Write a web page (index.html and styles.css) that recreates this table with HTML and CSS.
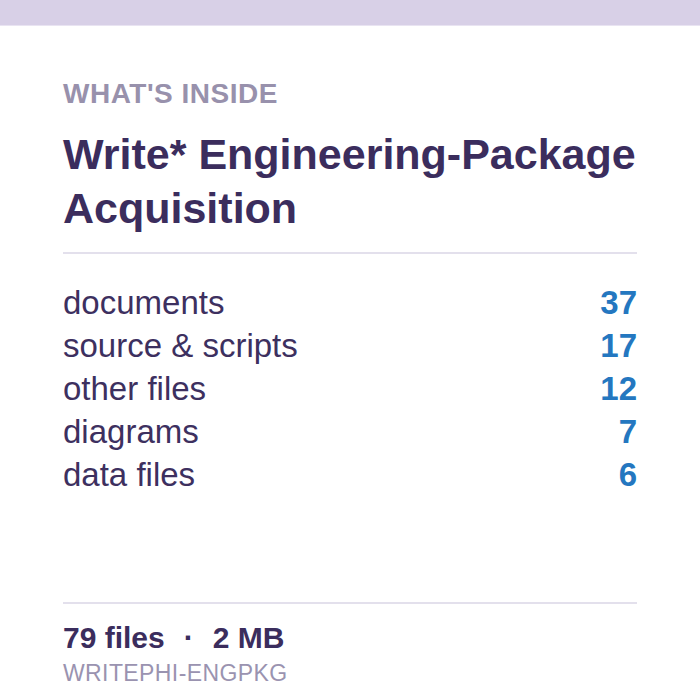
FILE: index.html
```html
<!DOCTYPE html>
<html>
<head>
<meta charset="utf-8">
<link rel="stylesheet" href="styles.css">
</head>
<body>
<div class="page">
  <div class="topbar"></div>
  <div class="card">
    <div class="eyebrow">WHAT'S INSIDE</div>
    <h1 class="title">Write* Engineering-Package Acquisition</h1>
    <ul class="list">
      <li class="row"><span class="label">documents</span><span class="count">37</span></li>
      <li class="row"><span class="label">source &amp; scripts</span><span class="count">17</span></li>
      <li class="row"><span class="label">other files</span><span class="count">12</span></li>
      <li class="row"><span class="label">diagrams</span><span class="count">7</span></li>
      <li class="row"><span class="label">data files</span><span class="count">6</span></li>
    </ul>
    <div class="footer">
      <div class="totals">79 files<span class="dot">·</span>2 MB</div>
      <div class="code">WRITEPHI-ENGPKG</div>
    </div>
  </div>
</div>
</body>
</html>
```

FILE: styles.css
```css
html, body {
  margin: 0;
  padding: 0;
  background: #ffffff;
}
body {
  font-family: "Liberation Sans", Arial, sans-serif;
}
.page {
  width: 700px;
  height: 700px;
  display: flex;
  flex-direction: column;
  overflow: hidden;
}
.topbar {
  height: 25px;
  background: #d8d0e7;
  border-bottom: 1px solid #e9e4f2;
  flex: none;
}
.card {
  flex: 1;
  display: flex;
  flex-direction: column;
  padding: 52px 63px 10px 63px;
}
.eyebrow {
  font-size: 28px;
  font-weight: 700;
  color: #9891ac;
  line-height: 32px;
  letter-spacing: 0.5px;
}
.title {
  margin: 17px 0 0 0;
  font-size: 43px;
  line-height: 54px;
  font-weight: 700;
  color: #3b2d5d;
  padding-bottom: 17px;
  border-bottom: 2px solid #e3e0ec;
}
.list {
  list-style: none;
  margin: 0;
  padding: 27px 0 0 0;
}
.row {
  display: flex;
  justify-content: space-between;
  align-items: baseline;
  font-size: 33px;
  line-height: 43px;
}
.label {
  color: #3d305f;
}
.count {
  color: #2477c0;
  font-weight: 700;
}
.footer {
  margin-top: auto;
  border-top: 2px solid #e3e0ec;
  padding-top: 16px;
}
.totals {
  font-size: 30px;
  font-weight: 700;
  color: #3b2d5d;
  line-height: 36px;
}
.dot {
  margin: 0 19px;
}
.code {
  font-size: 23px;
  letter-spacing: 0.4px;
  color: #9a93b0;
  line-height: 34px;
}
```
